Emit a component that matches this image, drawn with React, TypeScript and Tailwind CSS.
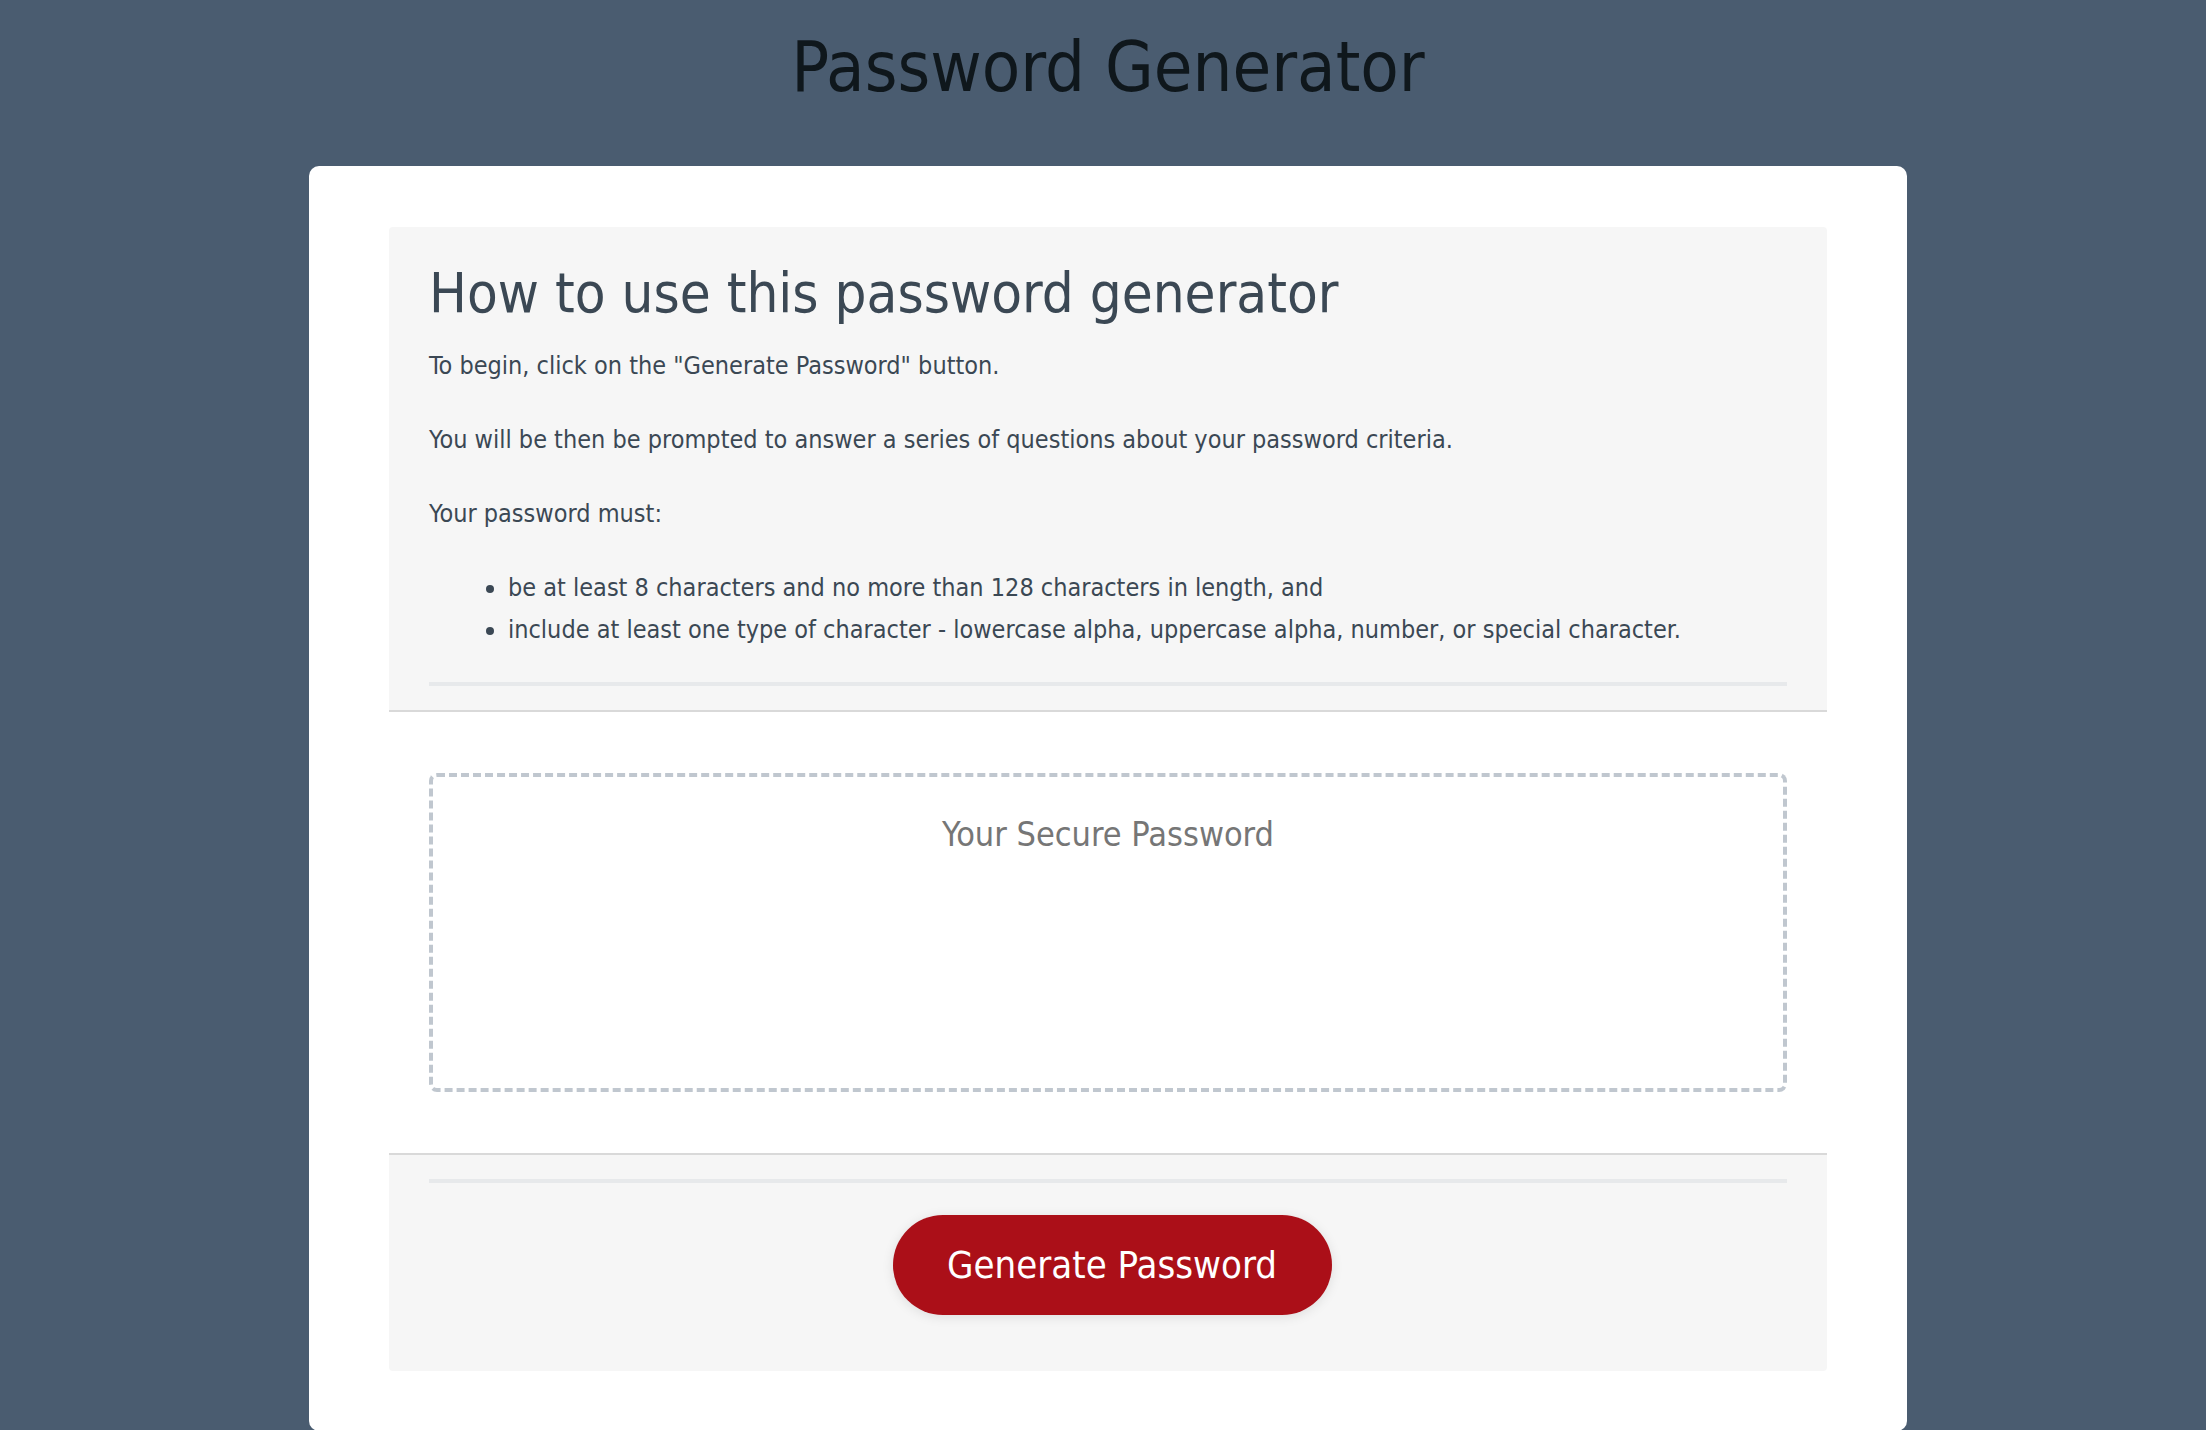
import { FC } from "react";

const font = "font-['DejaVu_Sans_Condensed','DejaVu_Sans',sans-serif]";

const criteria = [
  "be at least 8 characters and no more than 128 characters in length, and",
  "include at least one type of character - lowercase alpha, uppercase alpha, number, or special character.",
];

const App: FC = () => {
  return (
    <div className={`min-h-screen bg-[#4a5c70] pl-[10px] ${font}`}>
      <header className="pt-[27px] pb-[59px] text-center">
        <h1 className="text-[70px] leading-[80px] font-normal text-[#0f171c]">Password Generator</h1>
      </header>

      <div className="mx-auto w-[1598px] rounded-[10px] bg-white px-[80px] pt-[61px] pb-[60px] text-[#3b4854]">
        {/* how to use */}
        <div className="rounded-t-[4px] border-b-2 border-[#d9d9d9] bg-[#f6f6f6] px-[40px] pt-[30px] pb-[24px]">
          <h2 className="text-[56px] leading-[72px] font-normal">How to use this password generator</h2>
          <div className="mt-[16px] text-[25px] leading-[42px]">
            <p className="mb-[32px]">To begin, click on the "Generate Password" button.</p>
            <p className="mb-[32px]">You will be then be prompted to answer a series of questions about your password criteria.</p>
            <p className="mb-[32px]">Your password must:</p>
            <ul className="list-disc pl-[79px]">
              {criteria.map((c) => (
                <li key={c}>{c}</li>
              ))}
            </ul>
          </div>
          <div className="mt-[31px] h-[4px] bg-[#e7e9eb]" />
        </div>

        {/* password output */}
        <div className="px-[40px] pt-[61px] pb-[61px]">
          <textarea
            readOnly
            placeholder="Your Secure Password"
            className={`block h-[319px] w-full resize-none overflow-hidden rounded-[8px] border-4 border-dashed border-[#c0c7cf] bg-white px-[30px] pt-[31px] text-center text-[34px] leading-[52px] outline-none placeholder:text-[#767676] ${font}`}
          />
        </div>

        {/* footer */}
        <div className="rounded-b-[4px] border-t-2 border-[#d9d9d9] bg-[#f6f6f6] px-[40px] pt-[24px] pb-[24px] text-center">
          <div className="h-[4px] bg-[#e7e9eb]" />
          <button
            type="button"
            className="mt-[32px] mb-[32px] ml-[40px] mr-[32px] inline-flex h-[100px] w-[439px] items-center justify-center whitespace-nowrap rounded-full bg-[#ab0f18] text-[38px] leading-none text-white shadow-[0_2px_12px_rgba(0,0,0,0.1)]"
          >
            Generate Password
          </button>
        </div>
      </div>
    </div>
  );
};

export default App;
